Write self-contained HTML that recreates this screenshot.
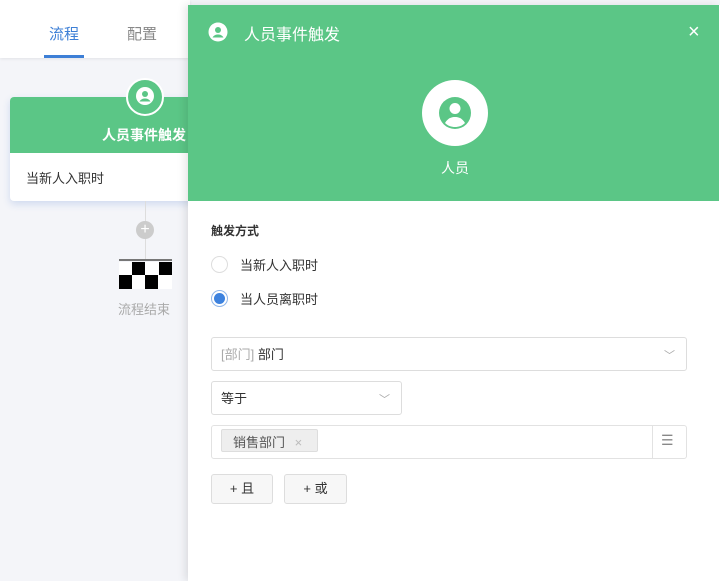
<!DOCTYPE html>
<html><head><meta charset="utf-8"><style>
*{margin:0;padding:0;box-sizing:border-box}
body{width:720px;height:581px;overflow:hidden;position:relative;background:#f4f5f9;font-family:"Liberation Sans","Noto Sans CJK SC",sans-serif;font-size:13px;color:#333}
.abs{position:absolute}
</style></head><body>
<div class="abs" style="left:0;top:0;width:190px;height:58px;background:#fff;box-shadow:0 1px 3px rgba(0,0,0,.08)"></div>
<div class="abs" style="left:49px;top:23px;font-size:15px;color:#3d7fd6">流程</div>
<div class="abs" style="left:44px;top:55px;width:40px;height:3px;background:#3d7fd6"></div>
<div class="abs" style="left:127px;top:23px;font-size:15px;color:#888">配置</div>
<div class="abs" style="left:10px;top:97px;width:185px;height:104px;background:#fff;border-radius:4px;box-shadow:0 3px 8px rgba(60,110,200,.2)"></div>
<div class="abs" style="left:10px;top:97px;width:185px;height:56px;background:#5bc686;border-radius:4px 4px 0 0"></div>
<div class="abs" style="left:126px;top:78px;width:38px;height:38px;border-radius:50%;background:#5bc686;border:2px solid #fff"></div>
<svg class="abs" style="left:135px;top:86px" width="20" height="20" viewBox="0 0 20 20"><circle cx="10" cy="10" r="9" fill="#fff"/><circle cx="10" cy="8" r="3" fill="#5bc686"/><path d="M4.5 15.5c1.5-2.5 3.5-3 5.5-3s4 .5 5.5 3" fill="#5bc686"/></svg>
<div class="abs" style="left:102px;top:125px;color:#fff;font-size:14px;font-weight:bold">人员事件触发</div>
<div class="abs" style="left:26px;top:168px;font-size:13px;color:#333">当新人入职时</div>
<div class="abs" style="left:145px;top:201px;width:1px;height:60px;background:#ddd"></div>
<div class="abs" style="left:136px;top:221px;width:18px;height:18px;border-radius:50%;background:#ccc;color:#fff;text-align:center;line-height:18px;font-size:16px">+</div>
<div class="abs" style="left:119px;top:259px;width:53px;height:2px;background:#777"></div>
<svg class="abs" style="left:119px;top:262px" width="53" height="27"><rect width="53" height="27" fill="#fff"/><rect x="0" y="13" width="13" height="14"/><rect x="13" y="0" width="13" height="13"/><rect x="26" y="13" width="13" height="14"/><rect x="40" y="0" width="13" height="13"/></svg>
<div class="abs" style="left:118px;top:299px;color:#aaa;font-size:13px">流程结束</div>
<div class="abs" style="left:188px;top:5px;width:532px;height:576px;background:#fff;box-shadow:-3px 0 8px rgba(0,0,0,.1)"></div>
<div class="abs" style="left:188px;top:5px;width:531px;height:196px;background:#5bc686"></div>
<svg class="abs" style="left:208px;top:22px" width="20" height="20" viewBox="0 0 20 20"><circle cx="10" cy="10" r="9.5" fill="#fff"/><circle cx="10" cy="8" r="3" fill="#5bc686"/><path d="M4.5 15.5c1.5-2.5 3.5-3 5.5-3s4 .5 5.5 3" fill="#5bc686"/></svg>
<div class="abs" style="left:244px;top:21px;color:#fff;font-size:16px">人员事件触发</div>
<div class="abs" style="left:688px;top:21px;color:#fff;font-size:20px">×</div>
<svg class="abs" style="left:422px;top:80px" width="66" height="66" viewBox="0 0 66 66"><circle cx="33" cy="33" r="33" fill="#fff"/><circle cx="33" cy="33" r="16" fill="#5bc686"/><circle cx="33" cy="28.5" r="5.5" fill="#fff"/><path d="M23 43c3-5 6.5-6 10-6s7 1 10 6c-3 3-6.5 4-10 4s-7-1-10-4z" fill="#fff"/></svg>
<div class="abs" style="left:441px;top:158px;color:#fff;font-size:14px">人员</div>
<div class="abs" style="left:211px;top:222px;font-weight:bold;font-size:12px">触发方式</div>
<div class="abs" style="left:211px;top:256px;width:17px;height:17px;border-radius:50%;border:1px solid #ddd"></div>
<div class="abs" style="left:240px;top:255px;font-size:13px">当新人入职时</div>
<div class="abs" style="left:211px;top:290px;width:17px;height:17px;border-radius:50%;border:1px solid #8fb6ea;padding:2px"><div style="width:11px;height:11px;border-radius:50%;background:#3d82de"></div></div>
<div class="abs" style="left:240px;top:289px;font-size:13px">当人员离职时</div>
<div class="abs" style="left:211px;top:337px;width:476px;height:34px;border:1px solid #ddd;border-radius:3px"></div>
<div class="abs" style="left:221px;top:344px"><span style="color:#aaa">[部门]</span> 部门</div>
<div class="abs" style="left:664px;top:347px;color:#aaa;font-size:11px">﹀</div>
<div class="abs" style="left:211px;top:381px;width:191px;height:34px;border:1px solid #ddd;border-radius:3px"></div>
<div class="abs" style="left:221px;top:388px">等于</div>
<div class="abs" style="left:379px;top:391px;color:#aaa;font-size:11px">﹀</div>
<div class="abs" style="left:211px;top:425px;width:476px;height:34px;border:1px solid #e2e2e2;border-radius:3px"></div>
<div class="abs" style="left:652px;top:426px;width:1px;height:32px;background:#e2e2e2"></div>
<div class="abs" style="left:221px;top:429px;width:97px;height:23px;background:#eee;border:1px solid #ddd;border-radius:2px;padding:2px 0 0 11px;color:#555">销售部门 <span style="color:#bbb;margin-left:6px">×</span></div>
<div class="abs" style="left:661px;top:432px;color:#888;font-size:14px">☰</div>
<div class="abs" style="left:211px;top:474px;width:62px;height:30px;border:1px solid #ddd;border-radius:3px;background:#f7f7f7;text-align:center;line-height:28px">+ 且</div>
<div class="abs" style="left:284px;top:474px;width:63px;height:30px;border:1px solid #ddd;border-radius:3px;background:#f7f7f7;text-align:center;line-height:28px">+ 或</div>
</body></html>
